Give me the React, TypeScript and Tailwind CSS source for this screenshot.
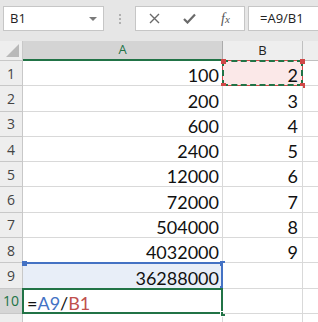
import React from "react";

const ROWS: { n: number; a: string; b: string }[] = [
  { n: 1, a: "100", b: "2" },
  { n: 2, a: "200", b: "3" },
  { n: 3, a: "600", b: "4" },
  { n: 4, a: "2400", b: "5" },
  { n: 5, a: "12000", b: "6" },
  { n: 6, a: "72000", b: "7" },
  { n: 7, a: "504000", b: "8" },
  { n: 8, a: "4032000", b: "9" },
  { n: 9, a: "36288000", b: "" },
  { n: 10, a: "", b: "" },
];

const ui = "font-['Open_Sans',sans-serif]";
const cellFont = "font-['Lato','Liberation_Sans',sans-serif] text-[18px] leading-none text-[#111]";

function Corner({ c, pos }: { c: string; pos: string }) {
  return <span className={`absolute w-[5px] h-[5px] ${c} ${pos}`} />;
}

function Row({ n, a, b }: { n: number; a: string; b: string }) {
  const isB1 = n === 1;
  const isA9 = n === 9;
  const isA10 = n === 10;
  return (
    <div className="flex h-[25.3px]">
      <div
        className={`w-[23px] shrink-0 flex items-center justify-center border-r border-b border-[#c8c8c8] text-[14px] ${ui} ${
          isA10 ? "bg-[#d6d6d6] text-[#217346]" : "bg-[#eeeeee] text-[#444]"
        }`}
      >
        {n}
      </div>
      <div
        className={`relative w-[200px] shrink-0 flex items-end justify-end pr-[3px] pb-[1px] border-r border-b border-[#d9d9d9] ${cellFont} ${
          isA9 ? "bg-[#e8eef8]" : "bg-white"
        }`}
      >
        {a}
        {isA9 && (
          <>
            <div className="absolute left-[-1px] right-[-1px] top-[-1px] h-[2px] bg-[#4472c4]" />
            <div className="absolute right-[-1px] top-[-1px] bottom-[-1px] w-[2px] bg-[#4472c4]" />
            <Corner c="bg-[#4472c4]" pos="left-[-1px] top-[-2px]" />
            <Corner c="bg-[#4472c4]" pos="right-[-3px] top-[-2px]" />
            <Corner c="bg-[#4472c4]" pos="right-[-3px] bottom-[-3px]" />
          </>
        )}
        {isA10 && (
          <>
            <div className="absolute inset-[-1px] border-2 border-[#217346]" />
            <div className="absolute inset-0 flex items-end pl-[4px] pb-[1px]">
              <span>=</span>
              <span className="text-[#4472c4]">A9</span>
              <span>/</span>
              <span className="text-[#c0504d]">B1</span>
            </div>
            <span className="absolute right-[-4px] bottom-[-4px] w-[6px] h-[6px] bg-[#217346] border border-white" />
          </>
        )}
      </div>
      <div
        className={`relative w-[80px] shrink-0 flex items-end justify-end pr-[4px] pb-[1px] border-r border-b border-[#d9d9d9] ${cellFont} ${
          isB1 ? "bg-[#fbe8e8]" : "bg-white"
        }`}
      >
        {b}
        {isB1 && (
          <>
            <div className="absolute inset-[-1px] border border-[#d04848]" />
            <div className="absolute inset-[-1px] border-2 border-dashed border-[#217346]" />
            <Corner c="bg-[#d04848]" pos="left-[-2px] top-[-2px]" />
            <Corner c="bg-[#d04848]" pos="right-[-3px] top-[-2px]" />
            <Corner c="bg-[#d04848]" pos="left-[-2px] bottom-[-3px]" />
            <Corner c="bg-[#d04848]" pos="right-[-3px] bottom-[-3px]" />
          </>
        )}
      </div>
      <div className="flex-1 bg-white border-b border-[#d9d9d9]" />
    </div>
  );
}

export default function App() {
  return (
    <div className={`w-[318px] h-[322px] overflow-hidden bg-[#e6e6e6] ${ui}`}>
      {/* formula bar */}
      <div className="flex items-start h-[41px] pt-[6px]">
        <div className="ml-[3px] w-[101px] h-[25px] bg-white border border-[#c6c6c6] flex items-center justify-between pl-[6px] pr-[6px]">
          <span className="text-[13px] text-[#222]">B1</span>
          <span className="w-0 h-0 border-l-[4px] border-r-[4px] border-t-[4px] border-l-transparent border-r-transparent border-t-[#7a7a7a]" />
        </div>
        <div className="w-[31px] h-[25px] flex flex-col items-center justify-center gap-[2px]">
          <span className="w-[2px] h-[2px] bg-[#b0b0b0]" />
          <span className="w-[2px] h-[2px] bg-[#b0b0b0]" />
          <span className="w-[2px] h-[2px] bg-[#b0b0b0]" />
        </div>
        <div className="w-[110px] h-[25px] bg-white border border-[#c6c6c6] flex items-center">
          <svg className="ml-[13px]" width="11" height="11" viewBox="0 0 11 11">
            <path d="M1 1 L10 10 M10 1 L1 10" stroke="#6a6a6a" strokeWidth="1.4" fill="none" />
          </svg>
          <svg className="ml-[23px]" width="13" height="11" viewBox="0 0 13 11">
            <path d="M1 6 L4.5 9.5 L12 1.5" stroke="#6a6a6a" strokeWidth="2.2" fill="none" />
          </svg>
          <span className="ml-[25px] font-['Liberation_Serif',serif] italic text-[#555] text-[14px] leading-none">
            f<span className="text-[11px]">x</span>
          </span>
        </div>
        <div className="ml-[3px] flex-1 h-[25px] bg-white border border-r-0 border-[#c6c6c6] flex items-center pl-[11px]">
          <span className="text-[13px] text-[#222]">=A9/B1</span>
        </div>
      </div>
      {/* column headers */}
      <div className="flex h-[20px] text-[13px]">
        <div className="relative w-[23px] shrink-0 bg-[#eeeeee] border-r border-b border-[#c8c8c8]">
          <span className="absolute right-[3px] bottom-[3px] w-0 h-0" style={{ borderBottom: "13px solid #b9b9b9", borderLeft: "13px solid transparent" }} />
        </div>
        <div className="w-[200px] shrink-0 bg-[#d4d4d4] border-r border-[#ababab] border-b-2 border-b-[#217346] flex items-center justify-center text-[#217346]">
          A
        </div>
        <div className="w-[80px] shrink-0 bg-[#eeeeee] border-r border-b border-[#c0c0c0] flex items-center justify-center text-[#222]">
          B
        </div>
        <div className="flex-1 bg-[#eeeeee] border-b border-[#c0c0c0]" />
      </div>
      {ROWS.map((r) => (
        <Row key={r.n} {...r} />
      ))}
      <div className="flex h-[25px]">
        <div className="w-[23px] shrink-0 bg-[#eeeeee] border-r border-[#c8c8c8]" />
        <div className="w-[200px] shrink-0 bg-white border-r border-[#d9d9d9]" />
        <div className="w-[80px] shrink-0 bg-white border-r border-[#d9d9d9]" />
        <div className="flex-1 bg-white" />
      </div>
    </div>
  );
}
